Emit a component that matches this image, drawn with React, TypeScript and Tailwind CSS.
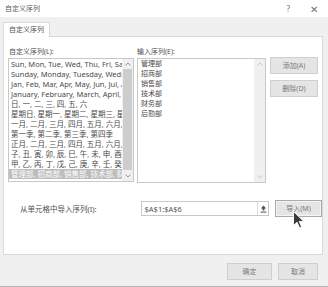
import React from "react";

const leftItems = [
  "Sun, Mon, Tue, Wed, Thu, Fri, Sat",
  "Sunday, Monday, Tuesday, Wednesday, Thursday, Friday, Saturday",
  "Jan, Feb, Mar, Apr, May, Jun, Jul, Aug, Sep, Oct, Nov, Dec",
  "January, February, March, April, May, June, July, August, September, October, November, December",
  "日, 一, 二, 三, 四, 五, 六",
  "星期日, 星期一, 星期二, 星期三, 星期四, 星期五, 星期六",
  "一月, 二月, 三月, 四月, 五月, 六月, 七月, 八月, 九月, 十月, 十一月, 十二月",
  "第一季, 第二季, 第三季, 第四季",
  "正月, 二月, 三月, 四月, 五月, 六月, 七月, 八月, 九月, 十月, 冬月, 腊月",
  "子, 丑, 寅, 卯, 辰, 巳, 午, 未, 申, 酉, 戌, 亥",
  "甲, 乙, 丙, 丁, 戊, 己, 庚, 辛, 壬, 癸",
  "管理部, 招商部, 销售部, 技术部, 财务部, 后勤部",
];

const entries = ["管理部", "招商部", "销售部", "技术部", "财务部", "后勤部"];

function Chevron({ up, color }: { up: boolean; color: string })
{
  return (
    <svg width="6" height="4" viewBox="0 0 6 4">
      <path d={up ? "M0.5 3.5 L3 1 L5.5 3.5" : "M0.5 0.5 L3 3 L5.5 0.5"} fill="none" stroke={color} strokeWidth="0.9" />
    </svg>
  );
}

function ScrollBar({ thumb }: { thumb: boolean })
{
  const c = thumb ? "#8a8a8a" : "#c4c4c4";
  return (
    <div className="w-[11px] h-full flex flex-col bg-[#f0f0f0]">
      <div className="h-[10px] flex items-center justify-center"><Chevron up color={c} /></div>
      <div className="flex-1 flex px-[1px]">
        {thumb && <div className="flex-1 bg-[#cdcdcd] mb-[1px]" />}
      </div>
      <div className="h-[10px] flex items-center justify-center"><Chevron up={false} color={c} /></div>
    </div>
  );
}

function Btn({ label, w, focus }: { label: string; w: string; focus?: boolean })
{
  return (
    <div className={`${w} h-[17px] flex items-center justify-center text-[7px] bg-[#e5e5e5] border ${focus ? "border-[#a9a9a9] shadow-[inset_0_0_0_1px_#f4f4f4]" : "border-[#cfcfcf]"} text-[#7a7a7a]`}>
      {label}
    </div>
  );
}

export default function App()
{
  return (
    <div className="relative w-[328px] h-[287px] bg-[#f0f0f0] flex flex-col text-[7.5px] leading-[10px] text-[#505050] font-['Noto_Sans','Noto_Sans_CJK_SC',sans-serif] border-b border-[#b5b5b5] overflow-hidden">
      {/* title bar */}
      <div className="h-[17px] bg-white flex items-center pl-[5px] pr-[10px] shrink-0">
        <span className="text-[#606060] text-[7px]">自定义序列</span>
        <span className="ml-auto text-[#707070] text-[8px]">?</span>
        <span className="ml-[20px] text-[#707070] text-[10px]">✕</span>
      </div>

      {/* tab strip */}
      <div className="h-[19px] shrink-0 flex items-end pl-[3px]">
        <div className="h-[15px] w-[47px] bg-white border border-b-0 border-[#d9d9d9] flex items-center justify-center text-[7px] -mb-px relative z-10">
          自定义序列
        </div>
      </div>

      {/* tab panel */}
      <div className="ml-[3px] w-[320px] h-[219px] shrink-0 bg-white border border-[#d9d9d9] pl-[4px] pt-[10px]">
        <div className="flex">
          <div className="w-[126px] flex flex-col">
            <div className="h-[10px] pl-[1px] text-[7px]">自定义序列(L):</div>
            <div className="mt-[1px] h-[124px] border border-[#c8c8c8] flex">
              <div className="flex-1 min-w-0 flex flex-col text-[#4a4a4a]">
                {leftItems.map((t, i) => (
                  <div
                    key={i}
                    className={`h-[10px] pl-[2px] whitespace-nowrap overflow-hidden ${i === leftItems.length - 1 ? "bg-[#bdbdbd] text-white" : ""}`}
                  >
                    {t}
                  </div>
                ))}
              </div>
              <ScrollBar thumb />
            </div>
          </div>

          <div className="w-[129px] ml-[3px] flex flex-col">
            <div className="h-[10px] text-[7px]">输入序列(E):</div>
            <div className="mt-[1px] h-[125px] border border-[#c8c8c8] flex">
              <div className="flex-1 flex flex-col pl-[3px] text-[#4a4a4a] text-[7px]">
                {entries.map((t) => (
                  <div key={t} className="h-[10px]">{t}</div>
                ))}
              </div>
              <ScrollBar thumb={false} />
            </div>
          </div>

          <div className="ml-[4px] flex flex-col gap-[6px] pt-[10px]">
            <Btn label="添加(A)" w="w-[48px]" />
            <Btn label="删除(D)" w="w-[48px]" />
          </div>
        </div>

        {/* import row */}
        <div className="flex items-center mt-[17px]">
          <div className="w-[133px] pl-[12px] text-[7.5px]">从单元格中导入序列(I):</div>
          <div className="w-[129px] h-[15px] border border-[#c8c8c8] flex items-center">
            <span className="flex-1 pl-[3px] text-[#555]">$A$1:$A$6</span>
            <div className="w-[11px] h-full border-l border-[#dcdcdc] flex items-center justify-center">
              <svg width="7" height="8" viewBox="0 0 7 8">
                <path d="M3.5 0.5 L6.2 3.4 L4.5 3.4 L4.5 5.5 L2.5 5.5 L2.5 3.4 L0.8 3.4 Z" fill="#555" />
                <rect x="0.5" y="6.6" width="6" height="1" fill="#555" />
              </svg>
            </div>
          </div>
          <div className="ml-[6px]">
            <Btn label="导入(M)" w="w-[47px]" focus />
          </div>
        </div>
      </div>

      {/* footer */}
      <div className="flex-1 flex justify-end items-start pt-[8px] pr-[10px] gap-[6px]">
        <Btn label="确定" w="w-[45px]" />
        <Btn label="取消" w="w-[40px]" />
      </div>

      {/* mouse cursor */}
      <svg className="absolute left-[293px] top-[211px]" width="12" height="18" viewBox="0 0 12 18">
        <path d="M0.5 0.5 L0.5 14.5 L4 11.2 L6.5 16.8 L8.6 15.9 L6.2 10.4 L10.8 10.4 Z" fill="#3a3a3a" stroke="#ffffff" strokeWidth="0.9" />
      </svg>
    </div>
  );
}
